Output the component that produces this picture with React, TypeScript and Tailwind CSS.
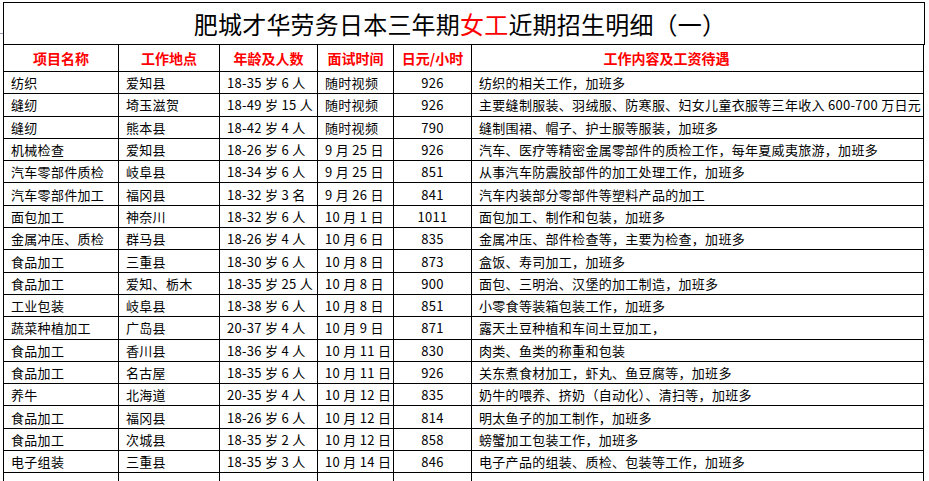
const rows: string[][] = [
  ['纺织', '爱知县', '18-35 岁 6 人', '随时视频', '926', '纺织的相关工作，加班多'],
  ['缝纫', '埼玉滋贺', '18-49 岁 15 人', '随时视频', '926', '主要缝制服装、羽绒服、防寒服、妇女儿童衣服等三年收入 600-700 万日元'],
  ['缝纫', '熊本县', '18-42 岁 4 人', '随时视频', '790', '缝制围裙、帽子、护士服等服装，加班多'],
  ['机械检查', '爱知县', '18-26 岁 6 人', '9 月 25 日', '926', '汽车、医疗等精密金属零部件的质检工作，每年夏威夷旅游，加班多'],
  ['汽车零部件质检', '岐阜县', '18-34 岁 6 人', '9 月 25 日', '851', '从事汽车防震胶部件的加工处理工作，加班多'],
  ['汽车零部件加工', '福冈县', '18-32 岁 3 名', '9 月 26 日', '841', '汽车内装部分零部件等塑料产品的加工'],
  ['面包加工', '神奈川', '18-32 岁 6 人', '10 月 1 日', '1011', '面包加工、制作和包装，加班多'],
  ['金属冲压、质检', '群马县', '18-26 岁 4 人', '10 月 6 日', '835', '金属冲压、部件检查等，主要为检查，加班多'],
  ['食品加工', '三重县', '18-30 岁 6 人', '10 月 8 日', '873', '盒饭、寿司加工，加班多'],
  ['食品加工', '爱知、栃木', '18-35 岁 25 人', '10 月 8 日', '900', '面包、三明治、汉堡的加工制造，加班多'],
  ['工业包装', '岐阜县', '18-38 岁 6 人', '10 月 8 日', '851', '小零食等装箱包装工作，加班多'],
  ['蔬菜种植加工', '广岛县', '20-37 岁 4 人', '10 月 9 日', '871', '露天土豆种植和车间土豆加工，'],
  ['食品加工', '香川县', '18-36 岁 4 人', '10 月 11 日', '830', '肉类、鱼类的称重和包装'],
  ['食品加工', '名古屋', '18-35 岁 6 人', '10 月 11 日', '926', '关东煮食材加工，虾丸、鱼豆腐等，加班多'],
  ['养牛', '北海道', '20-35 岁 4 人', '10 月 12 日', '835', '奶牛的喂养、挤奶（自动化）、清扫等，加班多'],
  ['食品加工', '福冈县', '18-26 岁 6 人', '10 月 12 日', '814', '明太鱼子的加工制作，加班多'],
  ['食品加工', '次城县', '18-35 岁 2 人', '10 月 12 日', '858', '螃蟹加工包装工作，加班多'],
  ['电子组装', '三重县', '18-35 岁 3 人', '10 月 14 日', '846', '电子产品的组装、质检、包装等工作，加班多'],
  ['', '', '', '', '', ''],
]

const headers = ['项目名称', '工作地点', '年龄及人数', '面试时间', '日元/小时', '工作内容及工资待遇']

export default function App() {
  return (
    <div
      className="flex h-[481px] w-[929px] overflow-hidden bg-white text-black"
      style={{ fontFamily: '"Noto Sans CJK SC", "Liberation Sans", sans-serif' }}
    >
      {/* spreadsheet gutter tick */}
      <div className="w-[3px] shrink-0">
        <div className="mt-[33px] h-px w-[3px] bg-gray-400" />
      </div>

      <div className="mt-[2px] w-[922px] shrink-0 border-l border-t border-black">
        <div className="flex h-[42px] items-center justify-center border-r border-b border-black pr-[8px] text-[24px] leading-none tracking-[0.2px]">
          <span>肥城才华劳务日本三年期</span>
          <span className="text-[#ff0000]">女工</span>
          <span>近期招生明细（一）</span>
        </div>

        <div className="grid grid-cols-[115px_101px_98px_76px_78px_452px]">
          {headers.map((h, i) => (
            <div
              key={h}
              className={`flex h-[27px] items-center justify-center border-r border-b border-black text-[14px] font-bold text-[#ff0000] ${
                i === 5 ? 'pr-[62px]' : ''
              }`}
            >
              {h}
            </div>
          ))}

          {rows.map((r, ri) =>
            r.map((c, ci) => (
              <div
                key={`${ri}-${ci}`}
                className={`flex h-[22.3px] items-center overflow-hidden whitespace-nowrap border-r border-b border-black text-[13px] leading-none tracking-[0.3px] ${
                  ci === 4 ? 'justify-center' : 'pl-[7px]'
                }`}
              >
                {c}
              </div>
            ))
          )}
        </div>
      </div>
    </div>
  )
}
